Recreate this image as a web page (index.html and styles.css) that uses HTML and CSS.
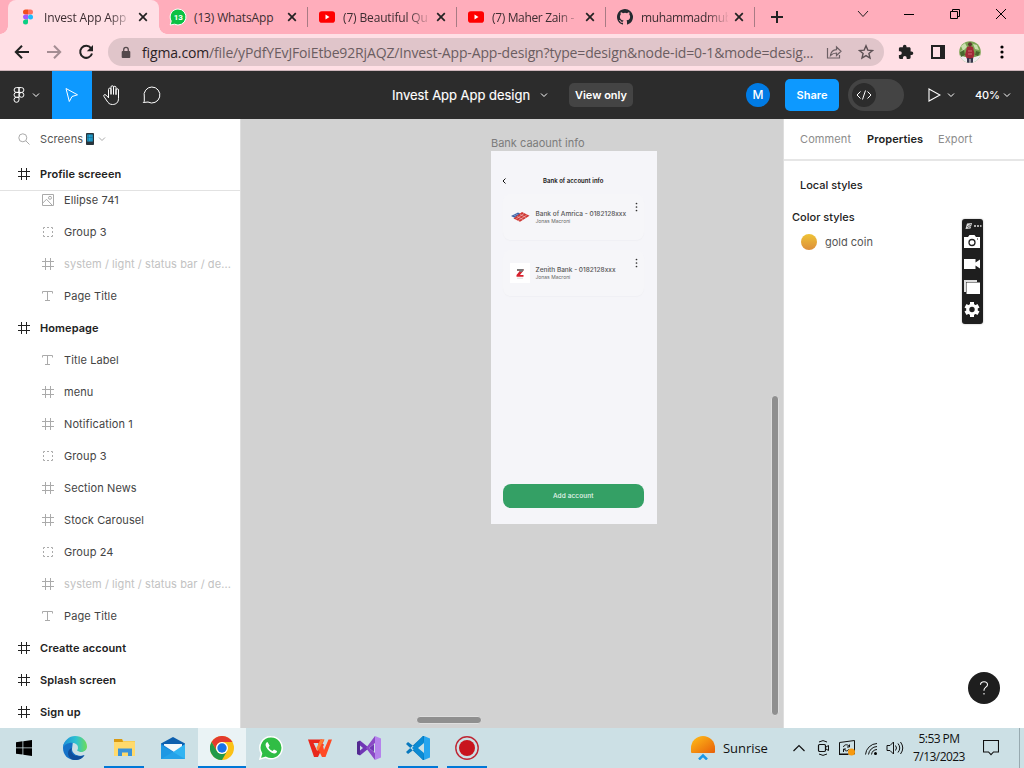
FILE: index.html
```html
<!DOCTYPE html>
<html lang="en">
<head>
<meta charset="utf-8">
<title>Invest App App design</title>
<link rel="stylesheet" href="styles.css">
</head>
<body>
<svg class="defs" width="0" height="0">
  <symbol id="x" viewBox="0 0 10 10"><path d="M1.2 1.2l7.6 7.6M8.800 1.200l-7.600 7.600" stroke="#222" stroke-width="1.700" fill="none"/></symbol>
  <symbol id="hash" viewBox="0 0 12 12"><path d="M3.500 0v12M8.500 0v12M0 3.500h12M0 8.500h12" stroke="currentColor" fill="none"/></symbol>
  <symbol id="type" viewBox="0 0 12 12"><path d="M.5 3.500v-2h10v2M5.500 1.500v9M3 10.500h5" stroke="currentColor" fill="none"/></symbol>
  <symbol id="group" viewBox="0 0 12 12"><path d="M1.500 3v-1.500h1.500M5 1.500h2M9 1.500h1.500V3M10.500 5v2M10.500 9v1.500H9M7 10.500H5M3 10.500H1.500V9M1.500 7V5" stroke="currentColor" fill="none"/></symbol>
  <symbol id="image" viewBox="0 0 12 12"><path d="M.5.5h11v11H.5zM.8 9l3.700-3.700 5.800 6" stroke="currentColor" fill="none"/><circle cx="8" cy="3.800" r="1.500" stroke="currentColor" fill="none"/></symbol>
  <symbol id="chev" viewBox="0 0 8 8"><path d="M1 2.500l3 3 3-3" stroke="currentColor" fill="none"/></symbol>
  <symbol id="yt" viewBox="0 0 16 12"><rect width="16" height="11.500" y=".2" rx="2.800" fill="#f00"/><path d="M6.500 3.500v5l4-2.500z" fill="#fff"/></symbol>
  <symbol id="dots" viewBox="0 0 3 10"><circle cx="1.500" cy="1.500" r=".85"/><circle cx="1.500" cy="5" r=".85"/><circle cx="1.500" cy="8.500" r=".85"/></symbol>
</svg>

<header class="tabs">
  <div class="tab active">
    <svg class="fav" viewBox="0 0 18 18"><path d="M9 1.500H6.500a2.500 2.500 0 0 0 0 5H9z" fill="#f24e1e"/><path d="M9 1.500h2.500a2.500 2.500 0 0 1 0 5H9z" fill="#ff7262"/><path d="M9 6.500H6.500a2.500 2.500 0 0 0 0 5H9z" fill="#a259ff"/><circle cx="11.500" cy="9" r="2.500" fill="#1abcfe"/><path d="M9 11.500H6.500A2.500 2.500 0 1 0 9 14z" fill="#0acf83"/></svg>
    <span class="tab-title fade">Invest App App</span><svg class="close"><use href="#x"/></svg>
  </div>
  <div class="tab sep">
    <svg class="fav" viewBox="0 0 18 18"><path d="M9 1a8 8 0 1 1-3.500 15.200L1.200 17l1-4A8 8 0 0 1 9 1z" fill="#0bc144" stroke="#fff"/><text x="9.300" y="12" class="badge">13</text></svg>
    <span class="tab-title">(13) WhatsApp</span><svg class="close"><use href="#x"/></svg>
  </div>
  <div class="tab sep">
    <svg class="fav yt"><use href="#yt"/></svg>
    <span class="tab-title fade">(7) Beautiful Qu</span><svg class="close"><use href="#x"/></svg>
  </div>
  <div class="tab sep">
    <svg class="fav yt"><use href="#yt"/></svg>
    <span class="tab-title fade tight">(7) Maher Zain -</span><svg class="close"><use href="#x"/></svg>
  </div>
  <div class="tab sep">
    <svg class="fav" viewBox="-1 -1 18 18"><path fill="#24292f" d="M8 0C3.580 0 0 3.580 0 8c0 3.540 2.290 6.530 5.470 7.590.4.070.550-.170.550-.380 0-.190-.010-.820-.010-1.490-2.010.370-2.530-.490-2.690-.940-.090-.230-.480-.940-.820-1.130-.280-.150-.680-.520-.010-.530.630-.010 1.080.580 1.230.820.720 1.210 1.870.870 2.330.660.070-.520.280-.870.510-1.070-1.780-.2-3.640-.890-3.640-3.950 0-.870.310-1.590.820-2.150-.080-.2-.360-1.020.080-2.120 0 0 .670-.210 2.200.820a7.600 7.600 0 0 1 4 0c1.530-1.040 2.200-.820 2.200-.820.440 1.100.160 1.920.080 2.120.510.560.820 1.270.820 2.150 0 3.070-1.870 3.750-3.650 3.950.290.250.540.730.540 1.480 0 1.070-.010 1.930-.010 2.200 0 .210.150.460.550.380A8 8 0 0 0 8 0z"/></svg>
    <span class="tab-title fade tight">muhammadmub</span><svg class="close"><use href="#x"/></svg>
  </div>
  <svg class="plus" viewBox="0 0 12 12"><path d="M6 0v12M0 6h12" stroke="#222" stroke-width="2"/></svg>
  <div class="winctl">
    <svg viewBox="0 0 12 12"><path d="M1 3l5 5.500 5-5.500" stroke="#222" fill="none"/></svg>
    <svg viewBox="0 0 12 12"><path d="M1 6.500h10" stroke="#000"/></svg>
    <svg viewBox="0 0 12 12"><path d="M1.500 3.500h7v7h-7zM3.500 3.500v-2h7v7h-2" stroke="#000" fill="none"/></svg>
    <svg viewBox="0 0 12 12"><path d="M1 1l10 10M11 1L1 11" stroke="#000"/></svg>
  </div>
</header>

<nav class="toolbar">
  <svg viewBox="0 0 16 16"><path d="M15 8H2.500M8 1.800L1.800 8 8 14.200" stroke="#222" stroke-width="2" fill="none"/></svg>
  <svg viewBox="0 0 16 16"><path d="M1 8h12.500M8 1.800L14.200 8 8 14.200" stroke="#a48d93" stroke-width="2" fill="none"/></svg>
  <svg viewBox="0 0 16 16"><path d="M13 4.200A6 6 0 1 0 14 9.500" stroke="#222" stroke-width="2" fill="none"/><path d="M15 1v6.200H8.800z" fill="#222"/></svg>
  <div class="omnibox">
    <svg class="lock" viewBox="0 0 10 12"><rect x=".7" y="4.500" width="8.600" height="7" rx="1" fill="#54494c"/><path d="M2.700 5V3.200a2.300 2.300 0 0 1 4.600 0V5" stroke="#54494c" stroke-width="1.300" fill="none"/></svg>
    <span class="url"><b>figma.com</b>/file/yPdfYEvJFoiEtbe92RjAQZ/Invest-App-App-design?type=design&amp;node-id=0-1&amp;mode=desig...</span>
    <svg class="share-i" viewBox="0 0 16 16"><path d="M1.500 4v10h12v-3M4.500 11.500c.5-3.800 2.500-5.500 6-5.800V3l4.500 4.300-4.500 4.200V9c-2.500 0-4.200.7-6 2.500z" stroke="#6d6065" stroke-width="1.200" fill="none"/></svg>
    <svg class="star" viewBox="0 0 16 16"><path d="M8 1.800l1.800 4.300 4.700.4-3.600 3 1.100 4.600L8 11.600l-4 2.500 1.100-4.600-3.600-3 4.700-.4z" stroke="#5c5054" stroke-width="1.400" fill="none"/></svg>
  </div>
  <svg class="puzzle" viewBox="0 0 16 16"><path fill="#222" d="M13.600 7.500h-1V4.700c0-.8-.6-1.400-1.400-1.400H8.500V2.500a1.800 1.800 0 0 0-3.600 0v.8H2.300C1.500 3.300.9 3.900.9 4.700v2.500h1a1.900 1.900 0 0 1 0 3.800h-1v2.600c0 .8.600 1.400 1.400 1.400h2.600v-1a1.900 1.900 0 0 1 3.800 0v1h2.500c.8 0 1.400-.6 1.400-1.400v-2.700h1a1.700 1.700 0 0 0 0-3.400z"/></svg>
  <svg class="side" viewBox="0 0 16 16"><path d="M2 2h12v12H2z" stroke="#222" stroke-width="2" fill="none"/><path d="M10 2h4v12h-4z" fill="#222"/></svg>
  <svg class="avatar" viewBox="0 0 22 22"><defs><clipPath id="av"><circle cx="11" cy="11" r="10.800"/></clipPath></defs><g clip-path="url(#av)"><path d="M0 0h22v22H0z" fill="#7ba452"/><path d="M0 14l6 2h10l6-2v8H0z" fill="#f1eaed"/><path d="M2 5l4-3 2 4-4 4zM14 3l4 1 2 5-4-1zM1 10l3-1-1 3z" fill="#c9deac"/><path d="M1 11l4-2 1 5-4 2zM17 10l4 1-2 4-3-1z" fill="#49682e"/><path d="M8 6l3-1 3 1 1.500 7-1.500 5H8l-2-4z" fill="#a12a38"/><path d="M9 10h4M9 13h4" stroke="#cf6b70"/><circle cx="11" cy="3.200" r="2" fill="#5b3a30"/><path d="M8 17h2.500v5H8zM11.500 17H14v5h-2.500z" fill="#37354b"/></g></svg>
  <svg class="kebab" viewBox="0 0 4 14"><circle cx="2" cy="2" r="1.600"/><circle cx="2" cy="7" r="1.600"/><circle cx="2" cy="12" r="1.600"/></svg>
</nav>

<section class="figbar">
  <div class="logo"><svg viewBox="0 0 12 16"><path d="M6 .6H3.500a2.400 2.400 0 0 0 0 4.800H6zM6 .6h2.500a2.400 2.400 0 0 1 0 4.800H6zM6 5.400H3.500a2.400 2.400 0 0 0 0 4.900H6zM6 10.300H3.500A2.500 2.500 0 1 0 6 12.800z" stroke="#fff" fill="none"/><circle cx="8.500" cy="7.900" r="2.400" stroke="#fff" fill="none"/></svg><svg class="chev"><use href="#chev"/></svg></div>
  <div class="tool on"><svg viewBox="0 0 20 20"><path d="M4 3.500l11.500 6.300-5.500 1.700-2.700 5z" stroke="#fff" fill="none" stroke-linejoin="round"/></svg></div>
  <div class="tool"><svg viewBox="0 0 20 20"><path d="M6.500 12.500V4.400a1.200 1.200 0 0 1 2.500 0V9M9 9V2a1.200 1.200 0 0 1 2.500 0v7M11.500 9V2.500a1.200 1.200 0 0 1 2.500 0V9.500M14 9V5a1.200 1.200 0 0 1 2.500 0v8.500c0 4-2.500 6-6 6-3 0-4.200-1.500-5.500-3.500l-3-4.500c-1-1.500.8-2.500 2-1.400l2.500 2.600" stroke="#fff" fill="none" stroke-linecap="round"/></svg></div>
  <div class="tool"><svg viewBox="0 0 20 20"><path d="M9.800 2a8 8 0 1 1-3.800 15L1.300 17.500l1-1.200V12A8 8 0 0 1 9.800 2z" stroke="#fff" fill="none" stroke-linejoin="round"/></svg></div>
  <div class="doc"><span class="docname">Invest App App design</span><svg class="chev"><use href="#chev"/></svg></div>
  <span class="viewonly">View only</span>
  <span class="user">M</span>
  <span class="share">Share</span>
  <span class="dev"><i><svg viewBox="0 0 16 12"><path d="M4.500 2.500L1 6l3.500 3.500M11.500 2.500L15 6l-3.500 3.500M9.500 1.500l-3 9" stroke="#fff" fill="none"/></svg></i></span>
  <div class="play"><svg viewBox="0 0 14 14"><path d="M2 1l11 6-11 6z" stroke="#fff" stroke-width="1.100" fill="none"/></svg><svg class="chev"><use href="#chev"/></svg></div>
  <div class="zoom"><span>40%</span><svg class="chev"><use href="#chev"/></svg></div>
</section>

<main class="main">
  <aside class="left">
    <div class="pages"><svg class="search" viewBox="0 0 12 12"><circle cx="4.800" cy="4.800" r="4" stroke="#aaa" fill="none"/><path d="M7.800 7.800l3.700 3.700" stroke="#aaa"/></svg><span>Screens</span><svg class="phone" viewBox="0 0 8 12"><rect width="8" height="12" rx=".8" fill="#29343b"/><path d="M1.300 1.500h5.400v7H1.300z" fill="#20a9dc"/><path d="M2.500 1.500v7M5 1.500v7M1.300 4.500h5.400" stroke="#17698b" stroke-width=".6"/></svg><svg class="chev"><use href="#chev"/></svg></div>
    <div class="row top sticky"><svg><use href="#hash"/></svg><span>Profile screeen</span></div>
    <div class="list">
      <div class="rows">
        <div class="row"><svg><use href="#image"/></svg><span>Ellipse 741</span></div>
        <div class="row"><svg><use href="#group"/></svg><span>Group 3</span></div>
        <div class="row dim"><svg><use href="#hash"/></svg><span>system / light / status bar / de...</span></div>
        <div class="row"><svg><use href="#type"/></svg><span>Page Title</span></div>
        <div class="row top"><svg><use href="#hash"/></svg><span>Homepage</span></div>
        <div class="row"><svg><use href="#type"/></svg><span>Title Label</span></div>
        <div class="row"><svg><use href="#hash"/></svg><span>menu</span></div>
        <div class="row"><svg><use href="#hash"/></svg><span>Notification 1</span></div>
        <div class="row"><svg><use href="#group"/></svg><span>Group 3</span></div>
        <div class="row"><svg><use href="#hash"/></svg><span>Section News</span></div>
        <div class="row"><svg><use href="#hash"/></svg><span>Stock Carousel</span></div>
        <div class="row"><svg><use href="#group"/></svg><span>Group 24</span></div>
        <div class="row dim"><svg><use href="#hash"/></svg><span>system / light / status bar / de...</span></div>
        <div class="row"><svg><use href="#type"/></svg><span>Page Title</span></div>
        <div class="row top"><svg><use href="#hash"/></svg><span>Creatte account</span></div>
        <div class="row top"><svg><use href="#hash"/></svg><span>Splash screen</span></div>
        <div class="row top"><svg><use href="#hash"/></svg><span>Sign up</span></div>
      </div>
    </div>
  </aside>

  <section class="canvas">
    <span class="frame-label">Bank caaount info</span>
    <div class="frame">
      <div class="frame-head"><svg viewBox="0 0 4 6"><path d="M3.500.5L1 3l2.500 2.500" stroke="#111" fill="none"/></svg><span>Bank of account info</span></div>
      <div class="card">
        <svg class="bank" viewBox="0 0 20 12"><path d="M1 5l7-3.500 3.500 1.800-7 3.500z" fill="#3c62a8"/><path d="M3.500 3.800l3 1.600M5.500 2.800l3.500 1.800" stroke="#cfd8ec" stroke-width=".5"/><path d="M12 1l7.500 3.700-9.500 6-6.500-3.200z" fill="#cf3733"/><path d="M5.500 8.500L14 2.500M8 9.700L17 3.800M7 5.500l6 3M10 3.500l6 3" stroke="#f6dcdc" stroke-width=".5"/></svg>
        <div class="info"><b>Bank of Amrica - 0182128xxx</b><small>Jonas Macroni</small></div>
        <svg class="dots"><use href="#dots"/></svg>
      </div>
      <div class="card">
        <div class="bank zen"><svg viewBox="0 0 10 12"><path d="M2 2h6.500v1.500L5 8h3.500v1.800H1.500V8L5 3.700H2z" fill="#d8202c"/><path d="M2 2h6.500v1.500L7 5H4.500L5 3.700H2z" fill="#777"/><path d="M2 11.200h6" stroke="#ccc" stroke-width=".7"/></svg></div>
        <div class="info"><b>Zenith Bank - 0182128xxx</b><small>Jonas Macroni</small></div>
        <svg class="dots"><use href="#dots"/></svg>
      </div>
      <div class="add">Add account</div>
    </div>
    <i class="vbar"></i><i class="hbar"></i>
  </section>

  <aside class="right">
    <div class="ptabs"><span class="pt1">Comment</span><b class="pt2">Properties</b><span class="pt3">Export</span></div>
    <h3 class="local">Local styles</h3>
    <h3 class="color">Color styles</h3>
    <div class="coin"><i></i><span>gold coin</span></div>
    <div class="recorder">
      <svg viewBox="0 0 21 105"><path d="M5 4.500l5-.5-1.500 5.500-5 .5z" fill="#ddd"/><path d="M5 8l4-3M6 9l3-2" stroke="#333" stroke-width=".7"/><path d="M12 7h2M15 7h2M18 7h1.500" stroke="#ddd" stroke-width="1.500"/><path d="M2 18h4l1.500-2h5l1.500 2h4v11H2z" fill="#fff"/><circle cx="10" cy="23.500" r="3" fill="#fff" stroke="#222" stroke-width="1.300"/><path d="M15 20h1" stroke="#222"/><path d="M2 40h11.500v3.500L18 40.500v9L13.500 46.500V50H2z" fill="#fff"/><path d="M2 61h13v2H4v10H2z" fill="#ddd"/><path d="M4.500 63.500H18V75H4.500z" fill="#fff"/><g fill="#fff"><circle cx="10" cy="90.500" r="5.800"/><path d="M8 83h4v15H8z"/><path d="M8 83h4v15H8z" transform="rotate(60 10 90.500)"/><path d="M8 83h4v15H8z" transform="rotate(120 10 90.500)"/></g><circle cx="10" cy="90.500" r="2.700" fill="#1e1e1e"/></svg>
    </div>
    <div class="help"><svg viewBox="0 0 10 14"><path d="M1.500 3.800C1.500 1.800 3 .7 5 .7s3.500 1.100 3.500 3c0 2.300-3.500 2.600-3.500 5.300v.8M5 12v1.500" stroke="#fff" stroke-width="1.100" fill="none"/></svg></div>
  </aside>
</main>

<footer class="taskbar">
  <div class="start"><svg viewBox="0 0 16 16"><path d="M0 2.200L6.500 1.300V7.500H0zM7.300 1.200L16 0v7.500H7.300zM0 8.300h6.500v6.300L0 13.700zM7.300 8.300H16V16l-8.700-1.200z"/></svg></div>
  <div class="app"><svg viewBox="0 0 24 24"><defs><linearGradient id="e1" x2="1"><stop stop-color="#1b8fd9"/><stop offset=".55" stop-color="#2fc2d0"/><stop offset="1" stop-color="#6ddc58"/></linearGradient></defs><path d="M0 12C0 5 5 3 10 5l-1 8c0 4 4 8 12.500 6.200C19 22.500 16 24 12 24 5 24 0 19 0 12z" fill="#1572c8"/><path d="M0 11.500C1 4.500 6 0 12.200 0 19 0 24 5 24 10.500c0 3.500-2.700 5.500-6 5.500-2.500 0-4.500-.8-3.700-2.200C16.500 10 13 6.800 8.700 6.800 4.500 6.800 1.300 9 0 11.500z" fill="url(#e1)"/><path d="M9 12c-2.500 5 2.500 10.500 12.500 7.200C18 24 13 25 8.500 23.300 3.500 20 4 13.500 9 12z" fill="#104f9c"/><path d="M14.300 13.500c-.8 1.500.9 2.500 3.700 2.500 2 0 3.500-.5 4.500-1.300l-1.200 3.800c-5 2.200-10.500.3-10.800-3.500 0-2 2-3.500 4-3.500.5.500.3 1.200-.2 2z" fill="#cce0e5"/></svg></div>
  <div class="app run"><svg viewBox="0 0 24 24"><path d="M2 3h8l1.500 2H23v15H2z" fill="#f8ce55"/><path d="M2 3h8l1 3H2z" fill="#d99a12"/><path d="M2 6h21v14H2z" fill="#ffda6c"/><path d="M6 20v-7.500h14V20h-4v-3.500h-6V20z" fill="#3b93d9"/></svg></div>
  <div class="app"><svg viewBox="0 0 24 24"><path d="M0 7.500L12 1l12 6.500V23H0z" fill="#0d5fae"/><path d="M3 8h18v8H3z" fill="#f3f8fb"/><path d="M0 7.500L13 16 0 23z" fill="#1784d8"/><path d="M24 8v15H0l13-7.500z" fill="#31b4f2"/><path d="M0 23V9l24 14z" fill="#229de6" opacity=".8"/></svg></div>
  <div class="app hot"><svg viewBox="0 0 24 24"><circle cx="12" cy="12" r="12" fill="#fbc116"/><path d="M1.600 6A12 12 0 0 1 22.400 6H12a6 6 0 0 0-5.200 9z" fill="#e33b2e"/><path d="M1.600 6A12 12 0 0 0 12 24l5.200-9a6 6 0 0 1-10.400 0z" fill="#229a49"/><circle cx="12" cy="12" r="6" fill="#fff"/><circle cx="12" cy="12" r="4.700" fill="#1a73e8"/></svg></div>
  <div class="app"><svg viewBox="0 0 24 24"><path d="M12.300.8a11 11 0 1 1-5.500 20.600L1 23l1.500-5.500A11 11 0 0 1 12.300.8z" fill="#30bd45" stroke="#fff" stroke-width="1.500"/><path d="M8.500 6c-2 .5-2.500 3-1.200 5.300 1.700 3.200 4.600 5.700 7.700 6.200 2 .2 3-1 3-2.500l-3-1.600-1.500 1.500c-1.800-.6-3.300-2-4-3.700l1.200-1.500z" fill="#fff"/></svg></div>
  <div class="app"><svg viewBox="0 0 24 24"><path d="M0 3.500h14L12 7H5.500l3.700 8L13 7.500l3 1L10 21H6z" fill="#e9281c"/><path d="M10 8l3-4.500h3.500l-2 4.500L16 14l4.500-10.500H24L17.500 21H14l-4-8z" fill="#ff4a25"/><path d="M16 3.500L10 15l-1.500-3 4-8.500z" fill="#ff7d32"/></svg></div>
  <div class="app"><svg viewBox="0 0 24 24"><path d="M0 6l3-1.500L17 16v-8L3 19.500 0 18zM3 9.500v5L6 12z" fill="#7037b5" fill-rule="evenodd"/><path d="M0 6l3-1v14l-3-1z" fill="#532a91"/><path d="M9 12L18 0v7l-6 5 6 5v7z" fill="#8a49c6"/><path d="M18 0l6 2.500v19L18 24z" fill="#b582ec"/></svg></div>
  <div class="app run"><svg viewBox="0 0 24 24"><path d="M0 8l2-2L18 18v6h-1zM0 16l2 2L18 6V0h-1z" fill="#0879be"/><path d="M6 12L17 0l1 7-6 5 6 5-1 7z" fill="#0b8bd4"/><path d="M18 0l6 2.500v19L18 24z" fill="#27a5ee"/></svg></div>
  <div class="app run"><svg viewBox="0 0 24 24"><circle cx="12" cy="12" r="11.200" fill="none" stroke="#be2735" stroke-width="1.400"/><circle cx="12" cy="12" r="8" fill="#c8141d"/></svg></div>
  <div class="weather"><svg viewBox="0 0 24 24"><defs><linearGradient id="sun" x2="1" y2="1"><stop stop-color="#ffc019"/><stop offset="1" stop-color="#e85f09"/></linearGradient></defs><path d="M0 16v-4a12 12 0 0 1 24 0v4q0 1-1 1H1q-1 0-1-1z" fill="url(#sun)"/><path d="M8 23.500l4-4 4 4" stroke="#1b98e8" stroke-width="2.500" fill="none"/></svg><span>Sunrise</span></div>
  <div class="tray">
    <svg viewBox="0 0 16 16"><path d="M2.500 11L8 5.500l5.500 5.500" stroke="#111" stroke-width="1.200" fill="none"/></svg>
    <svg viewBox="0 0 16 16"><path d="M4 2Q8-.8 12 2M4 14q4 2.800 8 0" stroke="#111" fill="none"/><rect x="3.500" y="4.500" width="7" height="7" rx="1.200" stroke="#111" stroke-width="1.200" fill="none"/><path d="M11 7l2.500-1.500v5L11 9" stroke="#111" fill="none"/></svg>
    <svg viewBox="0 0 16 16"><path d="M.5 2.500l15-2v13.500H.5zM0 14.500h9M4.500 7c.5-3 5-3 6 0M8 7h2.500V4.500M10 9c-1 2.500-4 2.500-5 0M7 9H4.500v3" stroke="#111" fill="none"/><circle cx="12.500" cy="12" r="3.500" fill="#f79a10"/></svg>
    <svg viewBox="0 0 16 16"><path d="M2.500 14.500A12 12 0 0 1 14 3.500M5.500 14.500A9 9 0 0 1 14 6.500M8.500 14.500A6 6 0 0 1 14 9.500" stroke="#111" fill="none"/><circle cx="12.500" cy="13.500" r="1.500"/></svg>
    <svg class="spk" viewBox="0 0 18 16"><path d="M1 5.500h3L7.500 2v12L4 10.500H1zM9.500 5.500q2 2.500 0 5M12 3.500q3.500 4.500 0 9M14.500 2q4.500 6 0 12" stroke="#111" fill="none"/></svg>
  </div>
  <div class="clock"><span>5:53 PM</span><span>7/13/2023</span></div>
  <svg class="notif" viewBox="0 0 16 16"><path d="M.5.5h15v11.500h-5L8 14.700 5.500 12h-5z" stroke="#111" stroke-width="1.100" fill="none"/></svg>
  <i class="peek"></i>
</footer>
</body>
</html>
```
FILE: styles.css
```css
* { box-sizing: border-box; }
body { margin: 0; width: 1024px; height: 768px; overflow: hidden; font-family: Inter, sans-serif; font-size: 11px; color: #333; background: #fff; display: flex; flex-direction: column; }
svg, i { display: block; flex: none; }
.defs { position: absolute; }
span, b { white-space: nowrap; }

/* browser tabs */
.tabs { height: 34px; flex: none; background: #ffadbb; display: flex; align-items: center; padding-left: 8px; font-family: "Open Sans", sans-serif; font-size: 12px; color: #3c2d31; }
.tab { width: 149px; height: 34px; display: flex; align-items: center; padding-left: 10px; position: relative; flex: none; }
.tab.active { width: 151px; padding-left: 11px; background: #ffdfe5; border-radius: 8px 8px 0 0; }
.tab.active::before, .tab.active::after { content: ""; position: absolute; bottom: 0; width: 8px; height: 8px; }
.tab.active::before { left: -8px; background: radial-gradient(circle at 0 0, transparent 7.500px, #ffdfe5 8px); }
.tab.active::after { right: -8px; background: radial-gradient(circle at 100% 0, transparent 7.500px, #ffdfe5 8px); }
.tab.sep::after { content: ""; position: absolute; right: 0; top: 7px; width: 1px; height: 20px; background: #a87b84; }
.fav { width: 18px; height: 18px; margin-right: 7px; }
.fav.yt { width: 16px; height: 12px; margin: 0 8px 0 1px; }
.badge { font: bold 8px Roboto, sans-serif; fill: #fff; text-anchor: middle; }
.tab-title { width: 87px; letter-spacing: -.15px; }
.tab-title.tight { letter-spacing: -.35px; }
.fade { -webkit-mask-image: linear-gradient(90deg, #000 75%, transparent 102%); mask-image: linear-gradient(90deg, #000 75%, transparent 102%); }
.close { width: 10px; height: 10px; margin-left: 6px; }
.active .close { margin-left: 7px; }
.plus { width: 12px; height: 12px; margin-left: 16px; }
.winctl { display: flex; gap: 34px; margin: -6px 0 0 74px; }
.winctl svg { width: 12px; height: 12px; }

/* address bar */
.toolbar { height: 37px; flex: none; background: #ffdfe5; border-bottom: 1px solid #cdb5ba; display: flex; align-items: center; padding-left: 14px; }
.toolbar > svg { width: 16px; height: 16px; margin-right: 16px; }
.toolbar .omnibox { margin-left: -2px; width: 776px; height: 28px; border-radius: 14px; background: #e0c5ca; display: flex; align-items: center; padding-left: 13px; }
.lock { width: 10px; height: 13px; }
.url { margin-left: 11px; width: 676px; font-family: "Open Sans", sans-serif; font-size: 14px; letter-spacing: -.145px; color: #6b5d61; }
.url b { font-weight: 400; color: #2b2225; }
.share-i, .star { width: 16px; height: 16px; margin-left: 8px; }
.star { margin-left: 16px; }
.toolbar .puzzle { margin: 0 16px 0 14px; }
.toolbar .side { margin-right: 13px; }
.toolbar .avatar { width: 22px; height: 22px; margin-right: 19px; }
.toolbar .kebab { width: 4px; height: 14px; margin: 0; }

/* editor header */
.figbar { height: 48px; flex: none; background: #2c2c2c; color: #fff; display: flex; align-items: center; font-weight: 500; }
.chev { width: 8px; height: 8px; }
.logo { width: 52px; display: flex; align-items: center; padding-left: 13px; gap: 7px; }
.logo svg:first-child { width: 12px; height: 16px; }
.tool { width: 40px; height: 48px; display: flex; align-items: center; justify-content: center; }
.tool svg { width: 20px; height: 20px; }
.tool.on { background: #0d99ff; }
.doc { margin-left: 220px; width: 177px; display: flex; align-items: center; gap: 10px; font-size: 13px; font-weight: 400; }
.docname { width: 138px; letter-spacing: -.03px; -webkit-text-stroke: .15px #fff; }
.viewonly { width: 64px; height: 24px; line-height: 24px; border-radius: 5px; background: #444; text-align: center; font-weight: 600; }
.user { width: 24px; height: 24px; line-height: 24px; border-radius: 50%; background: #007be5; text-align: center; margin-left: 113px; font-size: 12px; }
.share { width: 54px; height: 32px; line-height: 32px; border-radius: 5px; background: #0d99ff; text-align: center; margin-left: 15px; font-weight: 600; }
.dev { width: 56px; height: 32px; border-radius: 16px; background: #444; margin-left: 9px; padding: 4px; }
.dev i { width: 24px; height: 24px; border-radius: 50%; background: #2c2c2c; display: flex; align-items: center; justify-content: center; }
.dev svg { width: 16px; height: 12px; }
.play { display: flex; align-items: center; margin-left: 23px; gap: 6px; }
.play svg:first-child { width: 14px; height: 14px; }
.zoom { display: flex; align-items: center; margin-left: 20px; gap: 3px; }
.zoom span { letter-spacing: -.1px; }

/* workspace */
.main { height: 609px; flex: none; display: grid; grid-template-columns: 240px 544px 240px; }
.left { background: #fff; display: flex; flex-direction: column; overflow: hidden; }
.pages { height: 39px; padding-top: 1px; display: flex; align-items: center; padding-left: 18px; color: #555; letter-spacing: .1px; }
.search { width: 12px; height: 12px; margin-right: 10px; }
.phone { width: 8px; height: 12px; margin: 0 4px 0 3px; }
.pages .chev { color: #aaa; }
.row { height: 32px; display: flex; align-items: center; gap: 10px; padding-left: 42px; color: #444; flex: none; letter-spacing: .1px; }
.row svg { width: 12px; height: 12px; color: #aaa; }
.row.top { padding-left: 18px; font-weight: 600; color: #222; letter-spacing: .08px; }
.row.top svg { color: #222; }
.row.dim span { color: #c2c2c2; letter-spacing: .07px; }
.sticky { height: 33px; border-bottom: 1px solid #e2e2e2; }
.list { flex: 1; overflow: hidden; }
.rows { margin-top: -7px; }

.canvas { position: relative; background: #d2d2d2; border-left: 1px solid #dedede; border-right: 1px solid #dedede; overflow: hidden; }
.frame-label { position: absolute; left: 250px; top: 17px; font-size: 11px; line-height: 14px; color: #7c7c7c; }
.frame { position: absolute; left: 249.500px; top: 32px; width: 166px; height: 373px; background: #f5f5f9; padding: 24px 12.500px 0 12px; }
.frame-head { height: 11px; display: flex; align-items: center; font-size: 6px; font-weight: 600; color: #111; }
.frame-head svg { width: 4px; height: 6px; margin-left: -1px; margin-top: 1px; }
.frame-head span { flex: 1; text-align: center; padding-right: 3px; letter-spacing: .05px; }
.card { height: 46px; margin-top: 8px; border-radius: 8px; background: #f6f6f9; box-shadow: 0 1px 1px #f0f0f4; display: flex; align-items: center; padding-left: 7px; position: relative; }
.card + .card { margin-top: 10px; }
.bank { width: 20px; height: 12px; }
.zen { height: 20px; background: #fff; display: flex; align-items: center; justify-content: center; }
.zen svg { width: 10px; height: 12px; }
.info { display: flex; flex-direction: column; margin: 1px 0 0 6px; }
.info b { font-size: 6.500px; line-height: 8px; font-weight: 500; color: #555; }
.info small { font-size: 5px; line-height: 7px; color: #666; }
.dots { position: absolute; right: 6px; top: 8px; width: 3px; height: 10px; fill: #333; }
.add { height: 24px; line-height: 24px; margin-top: 187.500px; border-radius: 8px; background: #34a065; color: #e9f7ef; text-align: center; font-size: 6.500px; font-weight: 500; letter-spacing: .1px; }
.vbar { position: absolute; right: 4px; top: 276px; width: 8px; height: 321px; border-radius: 4px; background: #8f8f8f; border: 1px solid #dedede; }
.hbar { position: absolute; left: 175px; bottom: 4px; width: 66px; height: 8px; border-radius: 4px; background: #8f8f8f; border: 1px solid #dedede; }

.right { background: #fff; position: relative; }
.ptabs { height: 42px; border-bottom: 2px solid #e6e6e6; display: flex; align-items: center; padding-left: 16px; color: #8c8c8c; letter-spacing: .1px; }
.pt1 { width: 67px; }
.pt2 { width: 71px; color: #222; font-weight: 600; }
.local, .color { margin: 0; font-size: 11px; line-height: 16px; font-weight: 500; color: #222; padding: 16px 0 0 16px; }
.color { padding: 16px 0 0 8px; }
.coin { display: flex; align-items: center; gap: 8px; margin: 9px 0 0 17px; color: #555; }
.coin i { width: 16px; height: 16px; border-radius: 50%; background: linear-gradient(#efc336, #dc8e3b); }
.recorder { position: absolute; left: 178px; top: 100px; width: 21px; height: 105px; background: #1e1e1e; border-radius: 3px; box-shadow: 0 0 2px #aaa; }
.help { position: absolute; left: 184px; top: 553px; width: 32px; height: 32px; border-radius: 50%; background: #1e1e1e; display: flex; align-items: center; justify-content: center; }
.help svg { width: 10px; height: 14px; }

/* taskbar */
.taskbar { height: 40px; flex: none; background: #cce0e5; display: flex; align-items: center; font-family: "Open Sans", sans-serif; color: #111; }
.start { width: 51px; padding-left: 16px; }
.start svg { width: 16px; height: 16px; }
.app { width: 48px; height: 40px; margin-right: 1px; display: flex; align-items: center; justify-content: center; }
.app svg { width: 24px; height: 24px; }
.run { background: linear-gradient(#0078d7, #0078d7) center bottom / 40px 2px no-repeat; }
.hot { background: #eaf3f5; border-bottom: 2px solid #0078d7; }
.hot svg { margin-top: 2px; }
.weather { width: 100px; margin-left: 199px; display: flex; align-items: center; gap: 8px; font-size: 13px; letter-spacing: -.05px; }
.weather svg { width: 24px; height: 24px; }
.tray { display: flex; gap: 8px; }
.tray svg { width: 16px; height: 16px; }
.tray .spk { width: 18px; margin-left: -1px; }
.clock { width: 56px; margin-left: 7px; display: flex; flex-direction: column; align-items: center; font-size: 12px; line-height: 18px; letter-spacing: -.55px; }
.notif { width: 16px; height: 16px; margin-left: 16px; }
.peek { width: 1px; height: 40px; background: #98aab0; margin-left: 20px; }
```
